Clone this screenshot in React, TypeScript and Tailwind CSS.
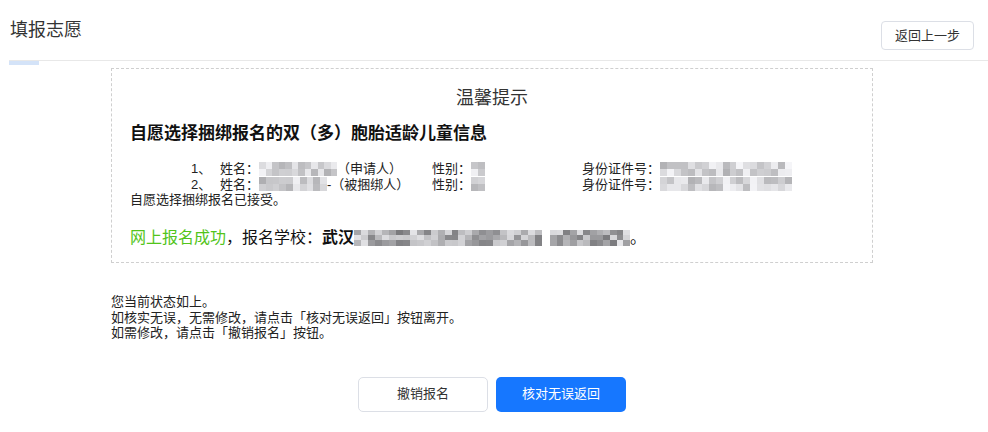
import React from "react";

// pixelated redaction block, like the blurred parts of the screenshot
function Mosaic({ w, h, seed, dark = false }: { w: number; h: number; seed: number; dark?: boolean }) {
  const cell = 7;
  const cols = Math.ceil(w / cell);
  const rows = Math.ceil(h / cell);
  const cells = [];
  let s = seed;
  for (let i = 0; i < cols * rows; i++) {
    s = (s * 9301 + 49297) % 233280;
    const r = s / 233280;
    const base = dark ? 120 : 175;
    const v = Math.round(base + r * (dark ? 110 : 70));
    cells.push(`rgb(${v},${v},${v + 3})`);
  }
  return (
    <span
      className="inline-grid align-middle"
      style={{ width: w, height: h, gridTemplateColumns: `repeat(${cols}, 1fr)` }}
    >
      {cells.map((c, i) => (
        <span key={i} style={{ background: c }} />
      ))}
    </span>
  );
}

export default function App() {
  return (
    <div
      className="w-[988px] h-[432px] bg-white text-[#333] overflow-hidden"
      style={{ fontFamily: '"Liberation Sans", "Noto Sans CJK SC", sans-serif' }}
    >
      <div className="flex items-start justify-between pl-[10px] pr-[14px] pt-[15px] h-[60px]">
        <h1 className="mt-[2px] text-[18px] leading-[26px] text-[#333]">填报志愿</h1>
        <button className="mt-[6px] h-[29px] px-[13px] border border-[#dcdfe6] rounded-[4px] text-[13px] text-[#333] bg-white">
          返回上一步
        </button>
      </div>
      <div className="ml-[9px] border-t border-[#e8e8e8]">
        <div className="w-[30px] h-[4px] bg-[#d4e3f8]" />
      </div>

      <div className="ml-[111px] w-[762px] mt-[3px] h-[195px] border border-dashed border-[#cfcfcf] px-[18px] pt-[16px]">
        <div className="text-center text-[18px] leading-[26px] text-[#333]">温馨提示</div>
        <div className="mt-[11px] text-[17px] leading-[24px] font-bold text-[#111]">
          自愿选择捆绑报名的双（多）胞胎适龄儿童信息
        </div>
        <div className="mt-[15px] text-[13px] leading-[15.5px] text-[#222]">
          <div className="flex items-center">
            <span className="ml-[61px] w-[29px]">1、</span>
            <span>姓名：</span>
            <Mosaic w={78} h={14} seed={11} />
            <span className="w-[95px]">（申请人）</span>
            <span>性别：</span>
            <Mosaic w={14} h={14} seed={3} />
            <span className="ml-[97px]">身份证件号：</span>
            <Mosaic w={132} h={14} seed={21} />
          </div>
          <div className="flex items-center">
            <span className="ml-[61px] w-[29px]">2、</span>
            <span>姓名：</span>
            <Mosaic w={68} h={14} seed={45} />
            <span className="w-[105px]">-（被捆绑人）</span>
            <span>性别：</span>
            <Mosaic w={14} h={14} seed={7} />
            <span className="ml-[97px]">身份证件号：</span>
            <Mosaic w={132} h={14} seed={33} />
          </div>
          <div>自愿选择捆绑报名已接受。</div>
        </div>
        <div className="mt-[19px] flex items-center text-[16px] leading-[22px] text-[#111]">
          <span className="text-[#52c41a]">网上报名成功</span>
          <span>，报名学校：</span>
          <span className="font-bold">武汉</span>
          <Mosaic w={188} h={16} seed={5} dark />
          <span className="w-[8px]" />
          <Mosaic w={80} h={16} seed={17} dark />
          <span>。</span>
        </div>
      </div>

      <div className="ml-[111px] mt-[31px] text-[13px] leading-[15.5px] text-[#222]">
        <div>您当前状态如上。</div>
        <div>如核实无误，无需修改，请点击「核对无误返回」按钮离开。</div>
        <div>如需修改，请点击「撤销报名」按钮。</div>
      </div>

      <div className="mt-[36px] flex gap-[8px] pl-[358px]">
        <button className="w-[130px] h-[35px] border border-[#dcdfe6] rounded-[5px] bg-white text-[13px] text-[#333]">
          撤销报名
        </button>
        <button className="w-[130px] h-[35px] rounded-[5px] bg-[#1677ff] text-[13px] text-white">
          核对无误返回
        </button>
      </div>
    </div>
  );
}
